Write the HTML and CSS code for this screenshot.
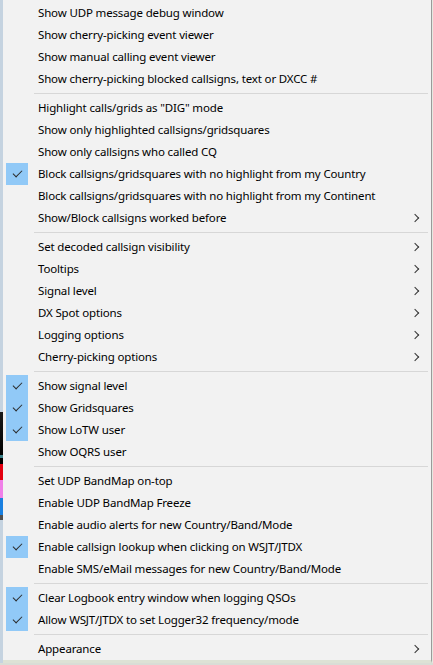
FILE: index.html
```html
<!DOCTYPE html>
<html>
<head>
<meta charset="utf-8">
<link rel="stylesheet" href="styles.css">
</head>
<body>
<div class="screen">
  <div class="appstrip"></div>
  <div class="menu">
    <div class="item">Show UDP message debug window</div>
    <div class="item">Show cherry-picking event viewer</div>
    <div class="item">Show manual calling event viewer</div>
    <div class="item">Show cherry-picking blocked callsigns, text or DXCC #</div>
    <div class="sep"></div>
    <div class="item">Highlight calls/grids as "DIG" mode</div>
    <div class="item">Show only highlighted callsigns/gridsquares</div>
    <div class="item">Show only callsigns who called CQ</div>
    <div class="item checked">Block callsigns/gridsquares with no highlight from my Country</div>
    <div class="item">Block callsigns/gridsquares with no highlight from my Continent</div>
    <div class="item sub">Show/Block callsigns worked before</div>
    <div class="sep"></div>
    <div class="item sub">Set decoded callsign visibility</div>
    <div class="item sub">Tooltips</div>
    <div class="item sub">Signal level</div>
    <div class="item sub">DX Spot options</div>
    <div class="item sub">Logging options</div>
    <div class="item sub">Cherry-picking options</div>
    <div class="sep"></div>
    <div class="item checked">Show signal level</div>
    <div class="item checked">Show Gridsquares</div>
    <div class="item checked">Show LoTW user</div>
    <div class="item">Show OQRS user</div>
    <div class="sep"></div>
    <div class="item">Set UDP BandMap on-top</div>
    <div class="item">Enable UDP BandMap Freeze</div>
    <div class="item">Enable audio alerts for new Country/Band/Mode</div>
    <div class="item checked">Enable callsign lookup when clicking on WSJT/JTDX</div>
    <div class="item">Enable SMS/eMail messages for new Country/Band/Mode</div>
    <div class="sep"></div>
    <div class="item checked">Clear Logbook entry window when logging QSOs</div>
    <div class="item checked">Allow WSJT/JTDX to set Logger32 frequency/mode</div>
    <div class="sep"></div>
    <div class="item sub">Appearance</div>
  </div>
</div>
<div class="below"></div>
</body>
</html>
```
FILE: styles.css
```css
html, body {
  margin: 0;
  padding: 0;
  background: #e4e8e0;
  overflow: hidden;
}
.screen {
  display: flex;
  width: 433px;
}
.appstrip {
  width: 3px;
  flex: none;
  background: linear-gradient(to bottom,
    #c5d3e0 0px, #c5d3e0 412px,
    #1a1a1a 412px, #000 455px,
    #3a7f88 455px, #3a7f88 458px,
    #000 458px, #000 464px,
    #e30010 464px, #e30010 480px,
    #f080e8 480px, #f080e8 498px,
    #1a80e0 498px, #1a80e0 515px,
    #505050 515px, #505050 520px,
    #c5d3e0 520px);
}
.menu {
  width: 428px;
  flex: none;
  background: #f2f2f2;
  border-right: 1px solid #9a9a9a;
  border-bottom: 3px solid #dde2d5;
  padding-top: 2px;
  font-family: "Noto Sans", sans-serif;
  font-size: 11.5px;
  letter-spacing: -0.15px;
  color: #000;
}
.item {
  height: 22px;
  line-height: 22px;
  padding-left: 35px;
  position: relative;
  white-space: nowrap;
}
.item.checked::before {
  content: "";
  position: absolute;
  left: 3px;
  top: 0;
  width: 22px;
  height: 22px;
  background: #91c9f7;
}
.item.checked::after {
  content: "";
  position: absolute;
  left: 10px;
  top: 7px;
  width: 8px;
  height: 4px;
  border-left: 1.3px solid #2b2b2b;
  border-bottom: 1.3px solid #2b2b2b;
  transform: rotate(-45deg);
  transform-origin: center;
}
.item.sub::after {
  content: "";
  position: absolute;
  right: 13px;
  top: 8px;
  width: 5px;
  height: 5px;
  border-top: 1px solid #333;
  border-right: 1px solid #333;
  transform: rotate(45deg);
}
.sep {
  height: 7px;
  display: flex;
  align-items: center;
  padding-left: 31px;
  padding-right: 3px;
}
.sep::before {
  content: "";
  flex: 1;
  height: 1px;
  background: #d7d7d7;
}
.below {
  height: 10px;
  background: #d9ddd6;
}
```
